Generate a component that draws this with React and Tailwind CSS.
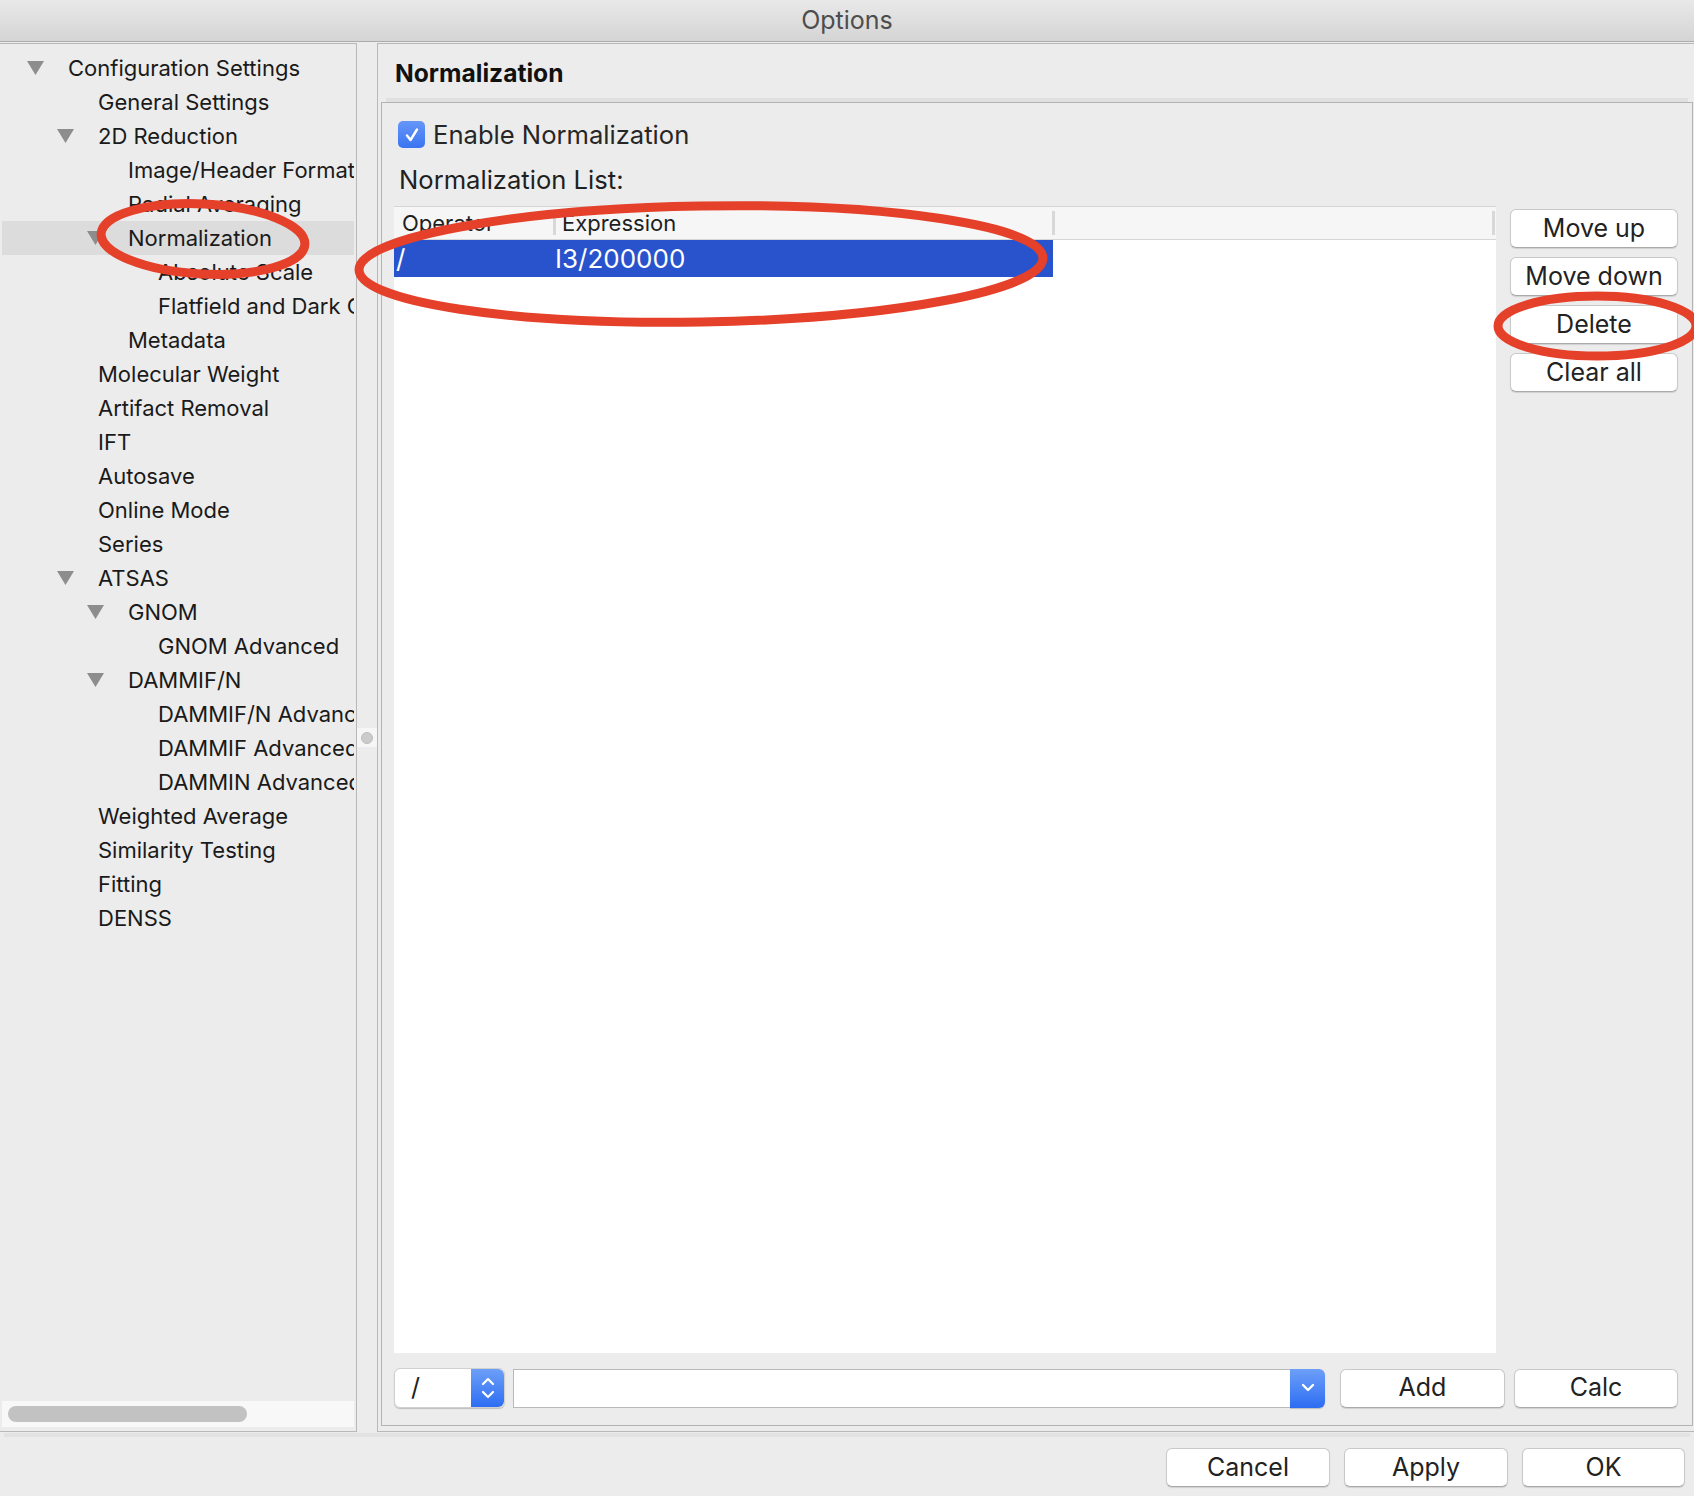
import React from "react";

const tree = [
  { l: 0, t: "Configuration Settings", c: true },
  { l: 1, t: "General Settings" },
  { l: 1, t: "2D Reduction", c: true },
  { l: 2, t: "Image/Header Format" },
  { l: 2, t: "Radial Averaging" },
  { l: 2, t: "Normalization", c: true, s: true },
  { l: 3, t: "Absolute Scale" },
  { l: 3, t: "Flatfield and Dark Correction" },
  { l: 2, t: "Metadata" },
  { l: 1, t: "Molecular Weight" },
  { l: 1, t: "Artifact Removal" },
  { l: 1, t: "IFT" },
  { l: 1, t: "Autosave" },
  { l: 1, t: "Online Mode" },
  { l: 1, t: "Series" },
  { l: 1, t: "ATSAS", c: true },
  { l: 2, t: "GNOM", c: true },
  { l: 3, t: "GNOM Advanced" },
  { l: 2, t: "DAMMIF/N", c: true },
  { l: 3, t: "DAMMIF/N Advanced" },
  { l: 3, t: "DAMMIF Advanced" },
  { l: 3, t: "DAMMIN Advanced" },
  { l: 1, t: "Weighted Average" },
  { l: 1, t: "Similarity Testing" },
  { l: 1, t: "Fitting" },
  { l: 1, t: "DENSS" },
];

const indent = ["w-[25px]", "w-[55px]", "w-[85px]", "w-[115px]"];

function Tri() {
  return (
    <svg width="17" height="14" viewBox="0 0 17 14">
      <path d="M0 0 H17 L8.5 14 Z" fill="#8d8d8d" />
    </svg>
  );
}

function Btn({ children, className = "" }) {
  return (
    <div
      className={
        "h-[39px] flex items-center justify-center rounded-[6px] bg-white border border-[#c9c9c9] border-b-[#a9a9a9] shadow-[0_1px_1px_rgba(0,0,0,0.12)] text-[25px] text-[#222] shrink-0 " +
        className
      }
    >
      {children}
    </div>
  );
}

export default function App() {
  return (
    <div className="relative w-[1694px] h-[1496px] bg-[#ececec] overflow-hidden font-['Inter','Noto_Sans',sans-serif] text-[#1a1a1a]">
      {/* Title bar */}
      <div className="h-[42px] pt-[1px] bg-gradient-to-b from-[#e9e9e9] to-[#d4d4d4] border-b border-[#adadad] flex items-center justify-center text-[25px] text-[#4d4d4d]">
        Options
      </div>

      {/* Main area */}
      <div className="flex mt-[1px] h-[1389px]">
        {/* Left tree panel */}
        <div className="w-[357px] shrink-0 border-t border-r border-b border-[#b8b8b8] flex flex-col">
          <div className="flex-1 pt-[7px] pl-[2px] overflow-hidden">
            {tree.map((n, i) => (
              <div
                key={i}
                className={
                  "h-[34px] w-[352px] flex items-center whitespace-nowrap overflow-hidden text-[22px] " +
                  (n.s ? "bg-[#dcdcdc]" : "")
                }
              >
                <div className={indent[n.l] + " shrink-0"} />
                <div className="w-[17px] shrink-0 flex items-center justify-center">
                  {n.c ? <Tri /> : null}
                </div>
                <div className="ml-[24px]">{n.t}</div>
              </div>
            ))}
          </div>
          <div className="h-[26px] mx-[2px] mb-[4px] bg-[#f8f8f8] flex items-center px-[6px]">
            <div className="w-[239px] h-[16px] rounded-full bg-[#c2c2c2]" />
          </div>
        </div>

        {/* Splitter */}
        <div className="w-[20px] shrink-0 flex items-center justify-center">
          <div className="w-[20px] h-[19px] bg-[#f6f6f6] flex items-center justify-center">
            <div className="w-[12px] h-[12px] rounded-full bg-[#cbcbcb] border border-[#bdbdbd]" />
          </div>
        </div>

        {/* Right panel */}
        <div className="flex-1 border-l border-t border-b border-[#b8b8b8] flex flex-col">
          <div className="h-[54px] pt-[4px] pl-[17px] flex items-center text-[24.6px] font-bold text-[#111]">
            Normalization
          </div>
          <div className="h-[4px] ml-[8px] mr-[6px] bg-[#e0e0e0]" />
          <div className="ml-[3px] mr-[1px] h-[1324px] border border-[#b3b3b3] flex flex-col">
            <div className="pt-[18px] pl-[16px] flex items-center">
              <div className="w-[27px] h-[27px] rounded-[5px] bg-gradient-to-b from-[#6696f8] to-[#3b74f1] flex items-center justify-center">
                <svg width="18" height="18" viewBox="0 0 18 18">
                  <path d="M4 9.5 L7.5 14 L14 3.5" fill="none" stroke="white" strokeWidth="2.4" strokeLinecap="round" strokeLinejoin="round" />
                </svg>
              </div>
              <div className="ml-[8px] text-[25.6px] text-[#262626] leading-[27px]">Enable Normalization</div>
            </div>
            <div className="mt-[17px] pl-[17px] h-[30px] flex items-center text-[25.6px] text-[#1f1f1f]">
              Normalization List:
            </div>
            <div className="mt-[11px] flex-1 flex pl-[12px] pr-[14px]">
              {/* Table */}
              <div className="w-[1102px] h-full bg-white flex flex-col">
                <div className="h-[34px] bg-[#f6f6f6] border-t border-b border-[#d6d6d6] flex items-center text-[22px] text-[#1f1f1f]">
                  <div className="w-[159px] pl-[8px]">Operator</div>
                  <div className="w-[3px] h-[24px] bg-[#d8d8d8]" />
                  <div className="w-[496px] pl-[6px]">Expression</div>
                  <div className="w-[3px] h-[24px] bg-[#d8d8d8]" />
                  <div className="flex-1" />
                  <div className="w-[3px] h-[24px] bg-[#d8d8d8]" />
                  <div className="w-[1px]" />
                </div>
                <div className="h-[37px] w-[659px] bg-[#2853cc] flex items-center text-[26px] text-white">
                  <div className="w-[161px] pl-[2px]">/</div>
                  <div>I3/200000</div>
                </div>
              </div>
              {/* Side buttons */}
              <div className="ml-[14px] mt-[3px] w-[168px] flex flex-col gap-[9px]">
                <Btn>Move up</Btn>
                <Btn>Move down</Btn>
                <Btn>Delete</Btn>
                <Btn>Clear all</Btn>
              </div>
            </div>
            <div className="mt-[15px] mb-[17px] h-[40px] flex items-center pl-[12px] pr-[14px]">
              {/* Spinbox */}
              <div className="w-[111px] h-[40px] flex rounded-[6px] shadow-[0_1px_1px_rgba(0,0,0,0.2)] border border-[#d0d0d0]">
                <div className="flex-1 bg-white rounded-l-[6px] flex items-center pl-[16px] text-[25px] text-[#222]">/</div>
                <div className="w-[33px] bg-gradient-to-b from-[#6d9ff8] to-[#2d6cf2] rounded-r-[6px] flex items-center justify-center">
                  <svg width="16" height="28" viewBox="0 0 16 28">
                    <path d="M3 10 L8 5 L13 10" fill="none" stroke="white" strokeWidth="2.2" strokeLinecap="round" strokeLinejoin="round" />
                    <path d="M3 18 L8 23 L13 18" fill="none" stroke="white" strokeWidth="2.2" strokeLinecap="round" strokeLinejoin="round" />
                  </svg>
                </div>
              </div>
              {/* Combo */}
              <div className="ml-[8px] flex-1 h-[39px] flex">
                <div className="flex-1 bg-white border border-[#b9b9b9] border-r-0" />
                <div className="w-[35px] bg-gradient-to-b from-[#6d9ff8] to-[#2d6cf2] rounded-r-[6px] flex items-center justify-center shadow-[0_1px_1px_rgba(0,0,0,0.2)]">
                  <svg width="18" height="12" viewBox="0 0 18 12">
                    <path d="M4 3 L9 8 L14 3" fill="none" stroke="white" strokeWidth="2.4" strokeLinecap="round" strokeLinejoin="round" />
                  </svg>
                </div>
              </div>
              <Btn className="ml-[15px] w-[165px]">Add</Btn>
              <Btn className="ml-[9px] w-[164px]">Calc</Btn>
            </div>
          </div>
        </div>
      </div>

      {/* Separator band */}
      <div className="mt-[1px] ml-[4px] mr-[4px] h-[4px] bg-[#e2e2e2]" />

      {/* Dialog buttons */}
      <div className="mt-[11px] flex justify-end pr-[9px] gap-[14px]">
        <Btn className="w-[164px]">Cancel</Btn>
        <Btn className="w-[164px]">Apply</Btn>
        <Btn className="w-[163px]">OK</Btn>
      </div>

      {/* Red annotation ellipses */}
      <svg className="absolute inset-0 pointer-events-none" width="1694" height="1496" viewBox="0 0 1694 1496">
        <ellipse cx="203" cy="239" rx="102" ry="35" fill="none" stroke="#e5402a" strokeWidth="9" transform="rotate(3 203 239)" />
        <ellipse cx="701" cy="264" rx="342" ry="58" fill="none" stroke="#e5402a" strokeWidth="9" transform="rotate(-1 701 264)" />
        <ellipse cx="1597" cy="326" rx="99" ry="30" fill="none" stroke="#e5402a" strokeWidth="9" />
      </svg>
    </div>
  );
}
